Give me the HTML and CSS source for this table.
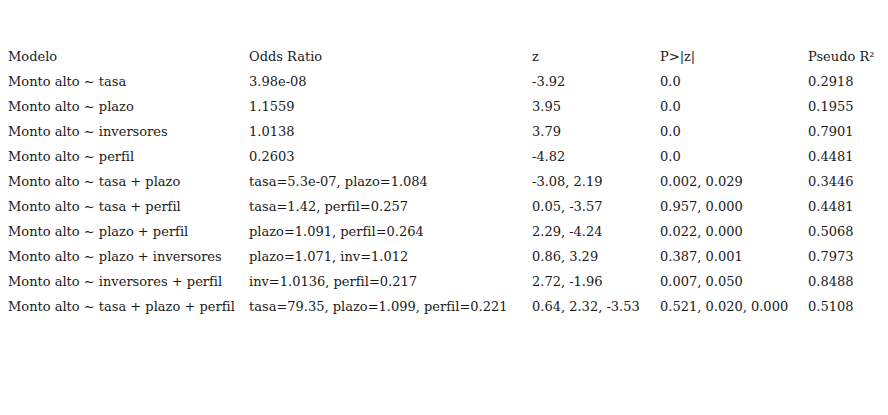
FILE: index.html
```html
<!DOCTYPE html>
<html lang="es">
<head>
<meta charset="utf-8">
<title>Modelos</title>
<link rel="stylesheet" href="styles.css">
</head>
<body>
<div class="wrap">
<table class="results">
<colgroup>
<col class="c1"><col class="c2"><col class="c3"><col class="c4"><col class="c5">
</colgroup>
<thead>
<tr><th>Modelo</th><th>Odds Ratio</th><th>z</th><th>P&gt;|z|</th><th>Pseudo R²</th></tr>
</thead>
<tbody>
<tr><td>Monto alto ~ tasa</td><td>3.98e-08</td><td>-3.92</td><td>0.0</td><td>0.2918</td></tr>
<tr><td>Monto alto ~ plazo</td><td>1.1559</td><td>3.95</td><td>0.0</td><td>0.1955</td></tr>
<tr><td>Monto alto ~ inversores</td><td>1.0138</td><td>3.79</td><td>0.0</td><td>0.7901</td></tr>
<tr><td>Monto alto ~ perfil</td><td>0.2603</td><td>-4.82</td><td>0.0</td><td>0.4481</td></tr>
<tr><td>Monto alto ~ tasa + plazo</td><td>tasa=5.3e-07, plazo=1.084</td><td>-3.08, 2.19</td><td>0.002, 0.029</td><td>0.3446</td></tr>
<tr><td>Monto alto ~ tasa + perfil</td><td>tasa=1.42, perfil=0.257</td><td>0.05, -3.57</td><td>0.957, 0.000</td><td>0.4481</td></tr>
<tr><td>Monto alto ~ plazo + perfil</td><td>plazo=1.091, perfil=0.264</td><td>2.29, -4.24</td><td>0.022, 0.000</td><td>0.5068</td></tr>
<tr><td>Monto alto ~ plazo + inversores</td><td>plazo=1.071, inv=1.012</td><td>0.86, 3.29</td><td>0.387, 0.001</td><td>0.7973</td></tr>
<tr><td>Monto alto ~ inversores + perfil</td><td>inv=1.0136, perfil=0.217</td><td>2.72, -1.96</td><td>0.007, 0.050</td><td>0.8488</td></tr>
<tr><td>Monto alto ~ tasa + plazo + perfil</td><td>tasa=79.35, plazo=1.099, perfil=0.221</td><td>0.64, 2.32, -3.53</td><td>0.521, 0.020, 0.000</td><td>0.5108</td></tr>
</tbody>
</table>
</div>
</body>
</html>
```
FILE: styles.css
```css
html, body {
  margin: 0;
  padding: 0;
  background: #ffffff;
}
.wrap {
  padding: 44px 0 0 8px;
}
.results {
  border-collapse: collapse;
  table-layout: fixed;
  width: 880px;
  font-family: "DejaVu Serif", serif;
  font-size: 13px;
  color: #1a1a1a;
}
.c1 { width: 241px; }
.c2 { width: 283px; }
.c3 { width: 128px; }
.c4 { width: 148px; }
.c5 { width: 80px; }
.results th,
.results td {
  padding: 0;
  height: 25px;
  line-height: 25px;
  text-align: left;
  font-weight: normal;
  white-space: nowrap;
  vertical-align: middle;
}
```
